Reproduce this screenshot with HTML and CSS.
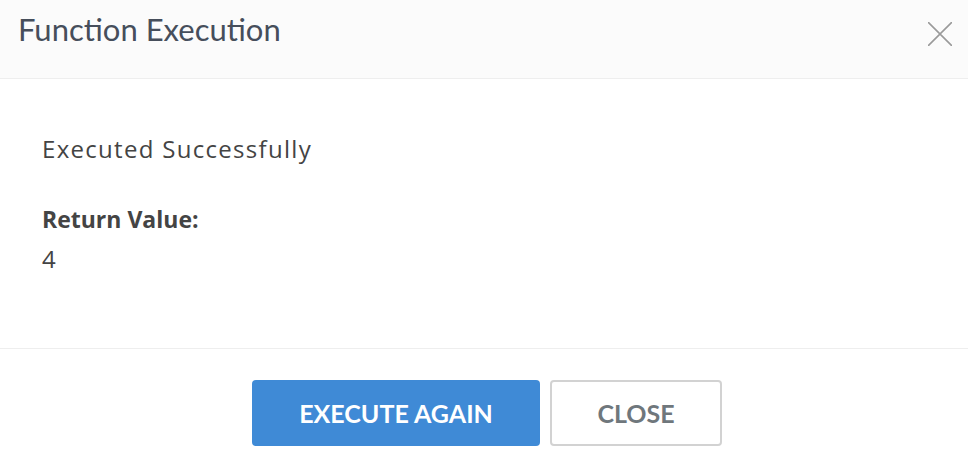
FILE: index.html
```html
<!DOCTYPE html>
<html lang="en">
<head>
    <meta charset="UTF-8">
    <meta name="viewport" content="width=device-width, initial-scale=1.0">
    <title>Function Execution</title>
    <link rel="stylesheet" href="styles.css">
</head>
<body>
    <div class="modal">
        <div class="modal-header">
            <h1>Function Execution</h1>
            <button class="close-icon" aria-label="Close">
                <svg width="24" height="24" viewBox="0 0 24 24">
                    <path d="M0 0 L24 24 M24 0 L0 24" stroke="#9a9a9a" stroke-width="1.6" fill="none"/>
                </svg>
            </button>
        </div>
        <div class="modal-body">
            <p class="status">Executed Successfully</p>
            <p class="label">Return Value:</p>
            <p class="value">4</p>
        </div>
        <div class="modal-footer">
            <button class="btn btn-primary">EXECUTE AGAIN</button>
            <button class="btn btn-default">CLOSE</button>
        </div>
    </div>
</body>
</html>
```

FILE: styles.css
```css
body {
    font-family: Lato, "Open Sans", sans-serif;
    margin: 0;
    padding: 0;
    background-color: white;
}
.modal {
    width: 968px;
    height: 470px;
}
.modal-header {
    height: 79px;
    box-sizing: border-box;
    background-color: #fbfbfb;
    border-bottom: 1px solid #eeeeee;
    display: flex;
    align-items: flex-start;
    justify-content: space-between;
    padding: 14px 16px 0 18px;
}
.modal-header h1 {
    margin: 0;
    font-size: 31px;
    line-height: 31px;
    font-weight: normal;
    color: #464e5b;
}
.close-icon {
    background: none;
    border: none;
    padding: 0;
    margin-top: 8px;
    width: 24px;
    height: 24px;
    cursor: pointer;
}
.close-icon svg {
    display: block;
}
.modal-body {
    height: 270px;
    box-sizing: border-box;
    border-bottom: 1px solid #eeeeee;
    padding: 58px 42px 0;
    color: #444444;
    font-family: "Open Sans", sans-serif;
    font-size: 23px;
    line-height: 23px;
    overflow: hidden;
}
.modal-body p {
    margin: 0;
}
.status {
    font-size: 24px;
    letter-spacing: 1.3px;
    margin-bottom: 48px !important;
}
.label {
    font-weight: bold;
    margin-bottom: 16px !important;
}
.value {
    font-size: 24px;
}
.modal-footer {
    display: flex;
    justify-content: center;
    gap: 10px;
    padding: 31px 0 0 6px;
}
.btn {
    height: 66px;
    border-radius: 4px;
    font-family: Lato, "Open Sans", sans-serif;
    font-size: 25px;
    font-weight: bold;
    cursor: pointer;
}
.btn-primary {
    width: 288px;
    background-color: #3f8ad6;
    color: white;
    border: none;
}
.btn-default {
    width: 172px;
    background-color: white;
    color: #6f777c;
    border: 2px solid #d2d2d2;
}
```
